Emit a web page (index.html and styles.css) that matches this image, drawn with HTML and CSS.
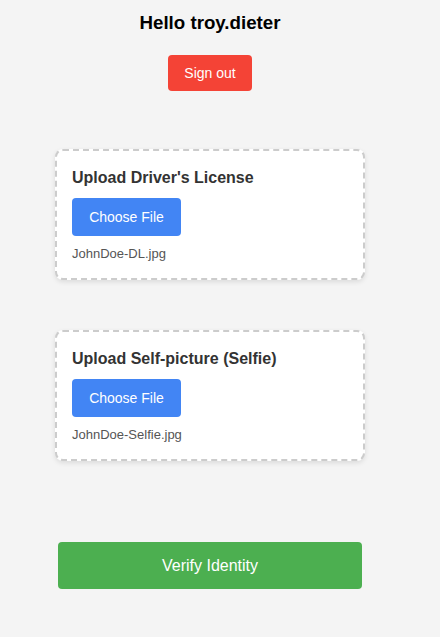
FILE: index.html
```html
<!DOCTYPE html>
<html>
<head>
<meta charset="utf-8">
<link rel="stylesheet" href="styles.css">
</head>
<body>
<div class="page">
  <h3 class="greeting">Hello troy.dieter</h3>
  <button class="btn-signout">Sign out</button>
  <div class="uploads">
    <div class="card">
      <h4 class="card-title">Upload Driver's License</h4>
      <button class="btn-choose">Choose File</button>
      <div class="filename">JohnDoe-DL.jpg</div>
    </div>
    <div class="card">
      <h4 class="card-title">Upload Self-picture (Selfie)</h4>
      <button class="btn-choose">Choose File</button>
      <div class="filename">JohnDoe-Selfie.jpg</div>
    </div>
  </div>
  <button class="btn-verify">Verify Identity</button>
</div>
</body>
</html>
```
FILE: styles.css
```css
html, body {
  margin: 0;
  padding: 0;
  background: #f4f4f4;
  font-family: "Liberation Sans", Arial, sans-serif;
}
.page {
  width: 420px;
  display: flex;
  flex-direction: column;
  align-items: center;
  padding-top: 12px;
}
.greeting {
  margin: 0;
  font-size: 18.72px;
  font-weight: bold;
  color: #000;
  line-height: 22px;
}
.btn-signout {
  margin-top: 21px;
  background: #f44336;
  color: #fff;
  border: none;
  border-radius: 4px;
  font-family: inherit;
  font-size: 14px;
  line-height: 16px;
  padding: 10px 16px;
  width: 84px;
}
.uploads {
  margin-top: 58px;
  display: flex;
  flex-direction: column;
  gap: 50px;
}
.card {
  width: 310px;
  box-sizing: border-box;
  background: #fff;
  border: 2px dashed #ccc;
  border-radius: 8px;
  box-shadow: 0 2px 5px rgba(0, 0, 0, 0.1);
  padding: 17px 15px 17px;
  display: flex;
  flex-direction: column;
  align-items: flex-start;
}
.card-title {
  margin: 0;
  font-size: 16px;
  line-height: 19px;
  font-weight: bold;
  color: #333;
}
.btn-choose {
  margin-top: 11px;
  background: #4285f4;
  color: #fff;
  border: none;
  border-radius: 4px;
  font-family: inherit;
  font-size: 14px;
  line-height: 16px;
  padding: 11px 17px;
  width: 109px;
}
.filename {
  margin-top: 10px;
  font-size: 13px;
  line-height: 15px;
  color: #555;
}
.btn-verify {
  margin-top: 81px;
  width: 304px;
  background: #4caf50;
  color: #fff;
  border: none;
  border-radius: 4px;
  font-family: inherit;
  font-size: 16px;
  line-height: 19px;
  padding: 14px 0;
}
```
